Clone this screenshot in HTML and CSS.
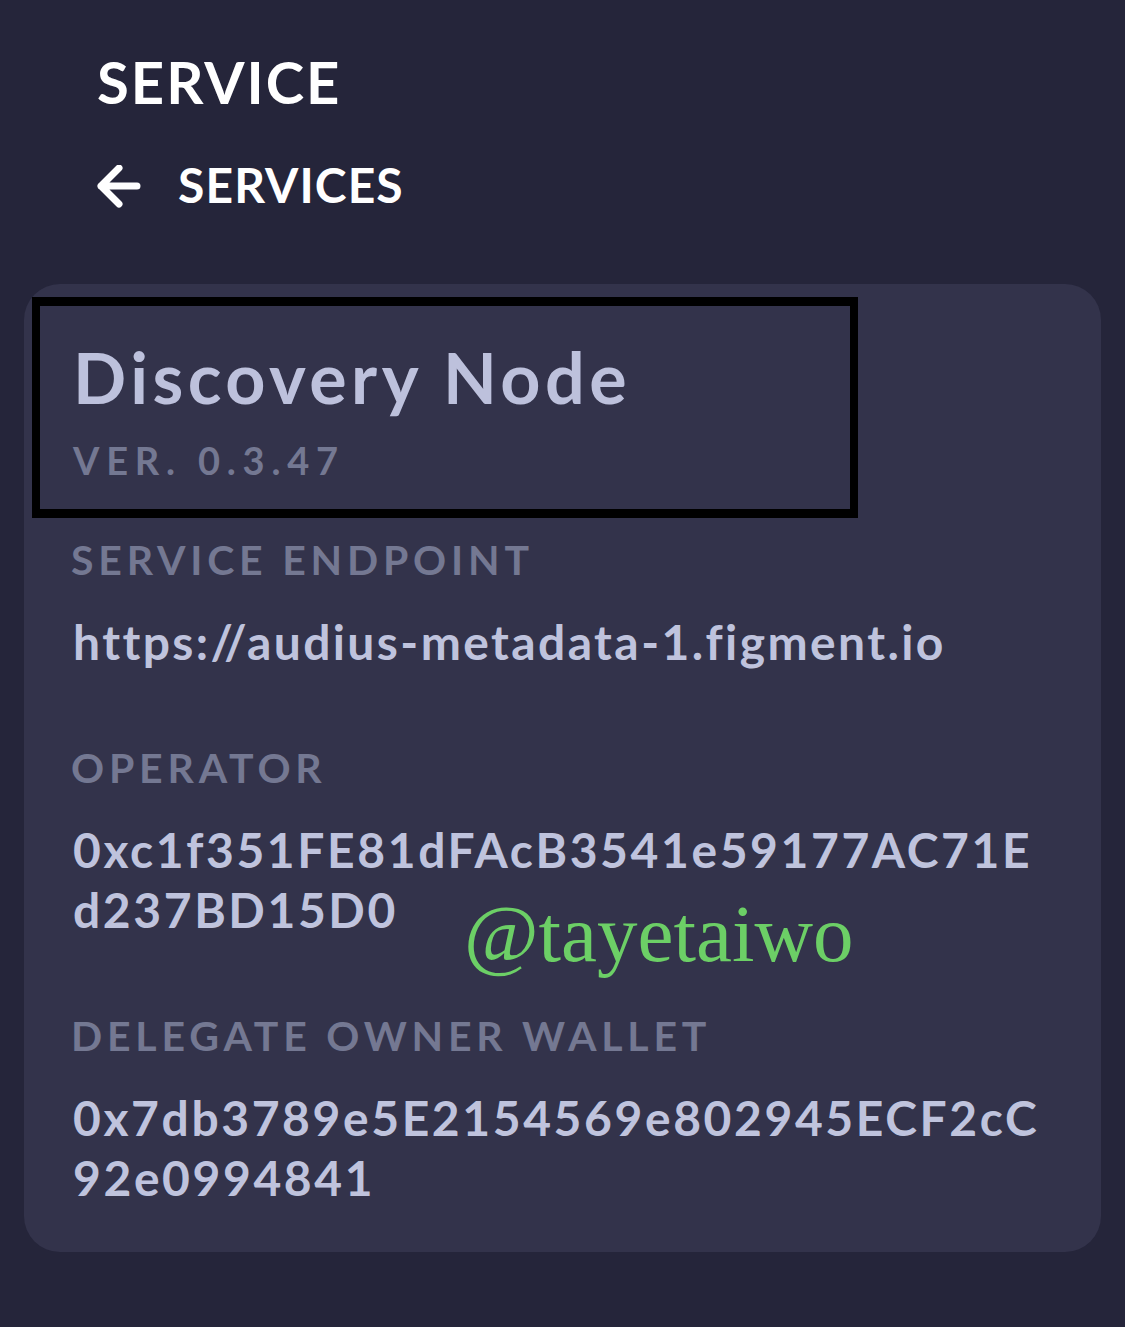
FILE: index.html
```html
<!DOCTYPE html>
<html lang="en">
<head>
<meta charset="utf-8">
<title>Service</title>
<link rel="stylesheet" href="styles.css">
</head>
<body>
<header class="page-head">
  <h1 class="page-title">SERVICE</h1>
  <a class="back-link" href="#">
    <svg class="back-icon" width="44" height="44" viewBox="0 0 44 44" aria-hidden="true">
      <path d="M40 21H4M22 3L4 21L22 39" fill="none" stroke="#ffffff" stroke-width="7" stroke-linecap="round" stroke-linejoin="round"/>
    </svg>
    <span class="back-text">SERVICES</span>
  </a>
</header>
<main class="card">
  <div class="title-box">
    <h2 class="node-name">Discovery Node</h2>
    <div class="node-version">VER. 0.3.47</div>
  </div>
  <section class="field">
    <div class="field-label">SERVICE ENDPOINT</div>
    <div class="field-value url">https://audius-metadata-1.figment.io</div>
  </section>
  <section class="field">
    <div class="field-label">OPERATOR</div>
    <div class="field-value hash">0xc1f351FE81dFAcB3541e59177AC71Ed237BD15D0</div>
  </section>
  <section class="field">
    <div class="field-label">DELEGATE OWNER WALLET</div>
    <div class="field-value hash">0x7db3789e5E2154569e802945ECF2cC92e0994841</div>
  </section>
  <div class="watermark">@tayetaiwo</div>
</main>
</body>
</html>
```

FILE: styles.css
```css
html, body {
  margin: 0;
  padding: 0;
}
body {
  background: #25253a;
  font-family: Lato, "Open Sans", "Liberation Sans", sans-serif;
  font-weight: 700;
  width: 1125px;
  height: 1327px;
  overflow: hidden;
}
.page-head {
  padding: 53px 0 0 97px;
}
.page-title {
  margin: 0;
  font-size: 58px;
  line-height: 58px;
  font-weight: 700;
  letter-spacing: 2px;
  color: #ffffff;
}
.back-link {
  display: flex;
  align-items: center;
  margin-top: 50px;
  height: 48px;
  text-decoration: none;
  color: #ffffff;
}
.back-icon {
  display: block;
  margin: 0 37px 0 0;
  position: relative;
  top: 2px;
}
.back-text {
  font-size: 48px;
  line-height: 48px;
  letter-spacing: 1.1px;
}
.card {
  position: relative;
  margin: 75px 24px 0 24px;
  height: 968px;
  box-sizing: border-box;
  padding: 13px 50px 0 49px;
  background: #33334b;
  border-radius: 36px;
}
.title-box {
  margin-left: -41px;
  width: 826px;
  box-sizing: border-box;
  border-style: solid;
  border-color: #000000;
  border-width: 9px 8px;
  padding: 36px 0 30px 33px;
}
.node-name {
  margin: 0;
  font-size: 70px;
  line-height: 70px;
  font-weight: 700;
  letter-spacing: 4.5px;
  color: #bdc1dc;
}
.node-version {
  margin-top: 29px;
  font-size: 38px;
  line-height: 38px;
  letter-spacing: 6.8px;
  color: #747892;
}
.field {
  margin-top: 75px;
}
.title-box + .field {
  margin-top: 21px;
}
.field-label {
  margin-left: -2px;
  font-size: 41px;
  line-height: 41px;
  letter-spacing: 4.8px;
  color: #747892;
}
.field-value {
  margin-top: 32px;
  font-size: 48px;
  line-height: 60px;
  color: #bfc3dd;
  word-break: break-all;
}
.url {
  letter-spacing: 2.4px;
}
.hash {
  letter-spacing: 2.6px;
}
.watermark {
  position: absolute;
  left: 440px;
  top: 610px;
  font-family: "Liberation Serif", serif;
  font-weight: 400;
  font-size: 81px;
  line-height: 80px;
  color: #6ccf66;
}
```
